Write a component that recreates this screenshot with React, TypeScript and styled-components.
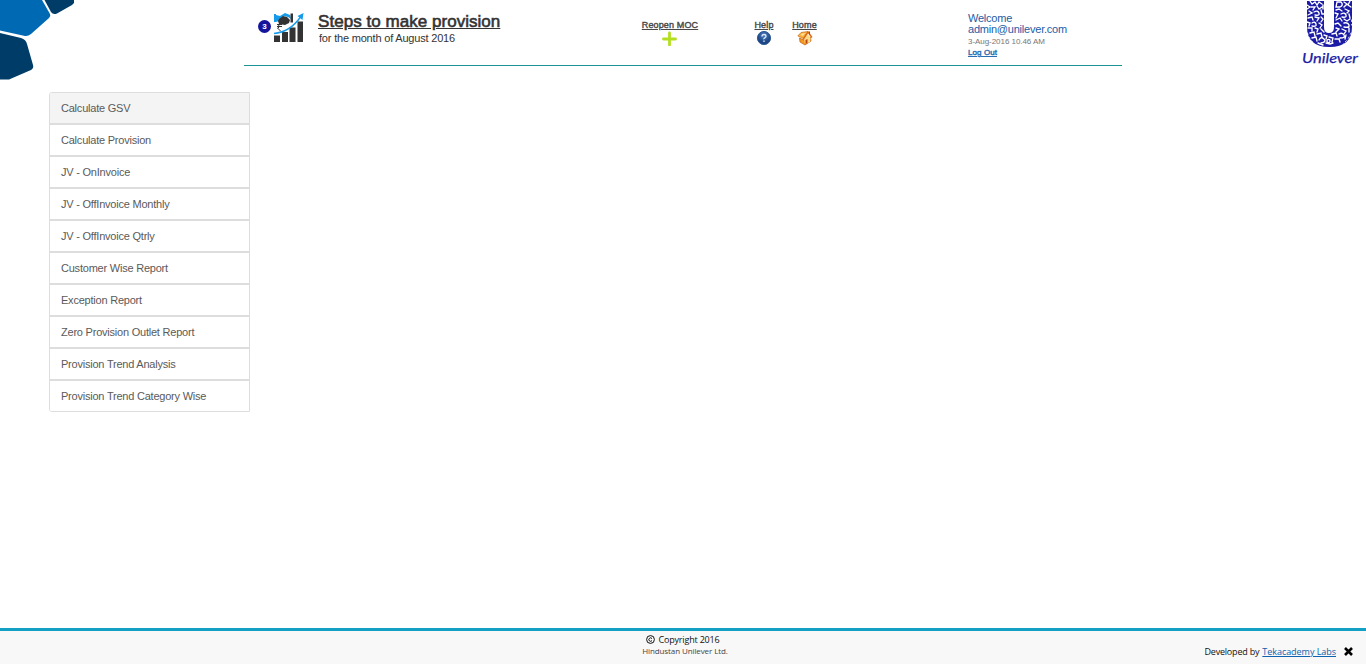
import React from "react";
import styled, { createGlobalStyle } from "styled-components";

const GlobalStyle = createGlobalStyle`
  * { box-sizing: border-box; }
  body {
    margin: 0;
    background: #fff;
    color: #333;
    font-family: "Liberation Sans", Arial, sans-serif;
    overflow: hidden;
  }
  a { color: inherit; }
`;

const Page = styled.div`
  display: flex;
  flex-direction: column;
  height: 664px;
`;

const Header = styled.header`
  display: flex;
  height: 80px;
  flex: none;
`;

const CornerArt = styled.svg`
  display: block;
  width: 100px;
  height: 80px;
`;

const TopBar = styled.div`
  display: grid;
  grid-template-columns: 12px 48px 324px 112px 38px 176px 1fr;
  width: 878px;
  height: 66px;
  margin-left: 144px;
  border-bottom: 1px solid #1a9494;
  padding-left: 14px;
`;

const StepBadge = styled.span`
  width: 13px;
  height: 13px;
  margin-top: 20px;
  border-radius: 50%;
  background: #15159b;
  color: #fff;
  font-size: 8px;
  font-weight: bold;
  line-height: 13px;
  text-align: center;
`;

const ChartIcon = styled.svg`
  width: 31px;
  height: 31px;
  margin: 12px 0 0 4px;
`;

const Title = styled.h1`
  margin: 12px 0 0;
  font-size: 17px;
  line-height: 20px;
  font-weight: normal;
  letter-spacing: 0.04px;
  -webkit-text-stroke: 0.6px currentColor;
  text-decoration: underline;
  white-space: nowrap;
`;

const Subtitle = styled.div`
  padding-left: 1px;
  font-size: 11px;
  line-height: 13px;
  letter-spacing: -0.19px;
  white-space: nowrap;
`;

const ToolLink = styled.a<{ $width: number }>`
  display: flex;
  flex-direction: column;
  align-items: center;
  width: ${(p) => p.$width}px;
  padding-top: 19px;
  color: #484848;
  font-size: 9px;
  line-height: 12px;
  letter-spacing: 0.14px;
  -webkit-text-stroke: 0.4px currentColor;
  text-decoration: underline;
  white-space: nowrap;

  svg { width: 16px; height: 16px; margin-top: -1px; }
`;

const Account = styled.div`
  padding-top: 13px;
  color: #1d5ca6;
  font-size: 11px;
  line-height: 11px;
  letter-spacing: -0.22px;
`;

const LoginTime = styled.div`
  padding-top: 1px;
  color: #777;
  font-size: 8px;
  line-height: 12px;
  letter-spacing: -0.05px;
`;

const LogOut = styled.a`
  display: block;
  color: #2a6db0;
  font-size: 8px;
  line-height: 10px;
  letter-spacing: 0.08px;
  -webkit-text-stroke: 0.4px currentColor;
  text-decoration: underline;
`;

const BrandLogo = styled.svg`
  display: block;
  width: 76px;
  height: 70px;
  margin-left: auto;
`;

const Main = styled.main`
  flex: 1;
  padding: 12px 0 0 49px;
`;

const Menu = styled.nav`
  width: 201px;
  border: 1px solid #ddd;
  border-radius: 3px 0 0 3px;
  overflow: hidden;
`;

const MenuItem = styled.a<{ $active?: boolean }>`
  display: block;
  height: 32px;
  padding-left: 11px;
  border-bottom: 2px solid #ddd;
  background: ${(p) => (p.$active ? "#f4f4f4" : "#fff")};
  color: #5a5a5a;
  font-size: 11px;
  line-height: 30px;
  letter-spacing: -0.22px;

  &:last-child { height: 30px; border-bottom: 0; }
`;

const Footer = styled.footer`
  display: grid;
  grid-template-columns: 1fr 110px 1fr;
  height: 36px;
  flex: none;
  border-top: 3px solid #14a0c4;
  background: #f8f8f8;
  color: #111;
  font-family: "Open Sans", "Noto Sans", sans-serif;
`;

const Copyright = styled.div`
  grid-column: 2;
  padding-top: 3px;
  text-align: center;
  font-size: 9px;
  line-height: 12px;
  letter-spacing: -0.18px;
  white-space: nowrap;
`;

const CopyrightMark = styled.svg`
  width: 9px;
  height: 9px;
  margin-right: 3px;
  vertical-align: -1px;
`;

const Company = styled.div`
  margin-top: -1px;
  padding-left: 4px;
  color: #444;
  font-size: 8px;
  line-height: 11px;
  letter-spacing: -0.1px;
`;

const Credit = styled.div`
  display: flex;
  justify-content: flex-end;
  align-items: flex-start;
  padding: 15px 13px 0 0;
  font-size: 9px;
  line-height: 12px;
  letter-spacing: -0.2px;

  a { margin-left: 3px; color: #0d63ae; letter-spacing: -0.04px; }
  svg { width: 9px; height: 9px; margin: 1px 0 0 8px; }
`;

const items = [
  "Calculate GSV",
  "Calculate Provision",
  "JV - OnInvoice",
  "JV - OffInvoice Monthly",
  "JV - OffInvoice Qtrly",
  "Customer Wise Report",
  "Exception Report",
  "Zero Provision Outlet Report",
  "Provision Trend Analysis",
  "Provision Trend Category Wise",
];

const Corner = () => (
  <CornerArt viewBox="0 0 100 80">
    <path d="M0 0H42L50 14Q51 16 49 18L31 34Q28 36.500 25 36L0 30.500Z" fill="#0069b4" />
    <path d="M44.500 0H74V3L72 5L57 13.500Q53 15 51 12Z" fill="#003c68" />
    <path d="M0 33L21 38Q26 39.500 27 44L33 65Q34 68 31 70L9 79.500H0Z" fill="#003c68" />
  </CornerArt>
);

const GrowthChart = () => (
  <ChartIcon viewBox="0 0 31 31">
    <path d="M0 23.500h6v6.500H0zM8 20h6v10H8zM15.500 15.500h6v14.500h-6zM23.500 9.500h5.500v20.500h-5.500z" fill="#333" />
    <path d="M0 2h2v8H0zM2 3l4 1 5-3 5 2 1 4-3-2-4-1-5 5-3 1z" fill="#159bea" />
    <path d="M5 7l4-3 4 1 3 3-1 3-4 2-6-1-1-3z" fill="#333" />
    <path d="M16.500 1.500h2.500v9h-2.500z" fill="#333" />
    <path d="M3 12.500h5M3 14.500h5M3.500 12.500q4 2 0 3.500l3 3" fill="none" stroke="#333" strokeWidth="1" />
    <path d="M0 21.500Q16 20 26.500 5" fill="none" stroke="#159bea" strokeWidth="1.400" />
    <path d="M29.500 1l-1 7-5-4z" fill="#159bea" />
  </ChartIcon>
);

const Plus = () => (
  <svg viewBox="0 0 16 16">
    <path d="M7.500 3v12M1.500 9h12" stroke="#b3df20" strokeWidth="2.800" strokeLinecap="round" />
  </svg>
);

const HelpBall = () => (
  <svg viewBox="0 0 16 16">
    <defs>
      <radialGradient id="ball" cy=".3">
        <stop offset="0" stopColor="#4e7fc0" />
        <stop offset="1" stopColor="#1d4685" />
      </radialGradient>
    </defs>
    <circle cx="8" cy="8" r="6.600" fill="url(#ball)" stroke="#345d97" />
    <path d="M6 6.500q0-2 2-2t2 1.800q0 1-1.200 1.500T8 9.300M8 10.500v1.500" fill="none" stroke="#dce7f5" strokeWidth="1.300" />
  </svg>
);

const House = () => (
  <svg viewBox="0 0 16 16">
    <path d="M2.500 8l4 2 7-3 .5 4-6 4-5-3z" fill="#f39a25" stroke="#c45d10" strokeWidth=".7" />
    <path d="M7 8l3.500-4 3 4-.5 4-5 2z" fill="#ffd98a" />
    <path d="M.8 6L4 2.500 11 1.500l-4.500 7z" fill="#f9b440" stroke="#c8681a" strokeWidth=".7" />
    <path d="M6 9.500l5-7.500 4 5.500" fill="none" stroke="#dd6a16" strokeWidth="1.400" />
    <path d="M8.500 10l2-1v4l-2 1z" fill="#b84412" />
    <path d="M3.500 4l5-1-3 3z" fill="#ffe29a" />
    <path d="M12.500 1.500v3" stroke="#b84412" />
  </svg>
);

const Unilever = () => (
  <BrandLogo viewBox="0 0 76 70">
    <path d="M17 1H34V27Q34 33 39 33T44 27V1H62V27Q62 47 39.500 47T17 27Z" fill="#1b1ba5" />
    <g fill="none" stroke="#fff" strokeWidth="1.350" strokeLinecap="round">
      <path d="M20 1l2 3 3-2 2 3 2-3 3 2M17 5l3 2-3 2M21 7l4 0-2 3M27 6l2 3 3-2M33 5v4M19 11l3 2-4 2M24 12q4-2 5 1t-4 2M31 10l1 4 2 0M18 18l4-1 1 3M25 17l4 1-2 3M31 17l2 2-2 3M17 22l3 1-1 3M22 23q3-2 4 1t-4 2M29 23l3 2-2 3M18 28l4 0 0 3M25 28l3 1-1 3M31 29l3 3M20 33l4-1 1 4M27 34l4-1 1 4M22 38l4-1 1 4M29 40q2-4 5-1t-3 4M34 35l3 1-1 3" />
      <path d="M47 2h4q3 3-1 5h-4zM54 2l3 2-3 3M60 1l-2 4 3 2M46 10l3-1 3 2M55 9l4 2-2 2M45 13l3 1-2 4M51 14q4-2 5 1t-4 2M59 14l1 4M46 20l4-2 2 3M54 19l3 2 3-2M45 24l3-1 3 3M54 23q4-1 5 2t-5 2M46 28l3 1-3 3M52 29l4 2-2 3M59 28l0 4M42 34l4-1 1 3M49 34q3-2 5 1t-4 3M39 37l4 1-1 4M45 39l4 0 1 3M36 43l4 1 3-1M56 35l-1 4M28 43l5 2" />
      <path d="M17.500 33l2 5 4 5M61.500 20v5M61 33l-3 6-5 5" strokeWidth=".8" strokeDasharray="1.500 3" />
      <circle cx="38.500" cy="41" r="1.600" />
    </g>
    <text x="12" y="62.500" textLength="56" lengthAdjust="spacingAndGlyphs" fill="#1b1ba5" stroke="#1b1ba5" strokeWidth=".25" fontFamily="Lato, sans-serif" fontStyle="italic" fontWeight="400" fontSize="14">
      Unilever
    </text>
  </BrandLogo>
);

export default function App() {
  return (
    <Page>
      <GlobalStyle />
      <Header>
        <Corner />
        <TopBar>
          <StepBadge>3</StepBadge>
          <GrowthChart />
          <div>
            <Title>Steps to make provision</Title>
            <Subtitle>for the month of August 2016</Subtitle>
          </div>
          <ToolLink $width={56}>Reopen MOC<Plus /></ToolLink>
          <ToolLink $width={20}>Help<HelpBall /></ToolLink>
          <ToolLink $width={25}>Home<House /></ToolLink>
          <Account>
            <div>Welcome</div>
            <div>admin@unilever.com</div>
            <LoginTime>3-Aug-2016 10.46 AM</LoginTime>
            <LogOut>Log Out</LogOut>
          </Account>
        </TopBar>
        <Unilever />
      </Header>
      <Main>
        <Menu>
          {items.map((label, i) => (
            <MenuItem key={label} $active={i === 0}>{label}</MenuItem>
          ))}
        </Menu>
      </Main>
      <Footer>
        <Copyright>
          <CopyrightMark viewBox="0 0 9 9" fill="none" stroke="#111">
            <circle cx="4.500" cy="4.500" r="3.900" />
            <path d="M6 3.500Q4.500 2 3.300 3.500t0 2.200Q4.500 7 6 5.700" />
          </CopyrightMark>
          Copyright 2016
          <Company>Hindustan Unilever Ltd.</Company>
        </Copyright>
        <Credit>
          Developed by <a href="#">Tekacademy Labs</a>
          <svg viewBox="0 0 9 9"><path d="M1 1l7 7M8 1l-7 7" stroke="#000" strokeWidth="2.600" /></svg>
        </Credit>
      </Footer>
    </Page>
  );
}
